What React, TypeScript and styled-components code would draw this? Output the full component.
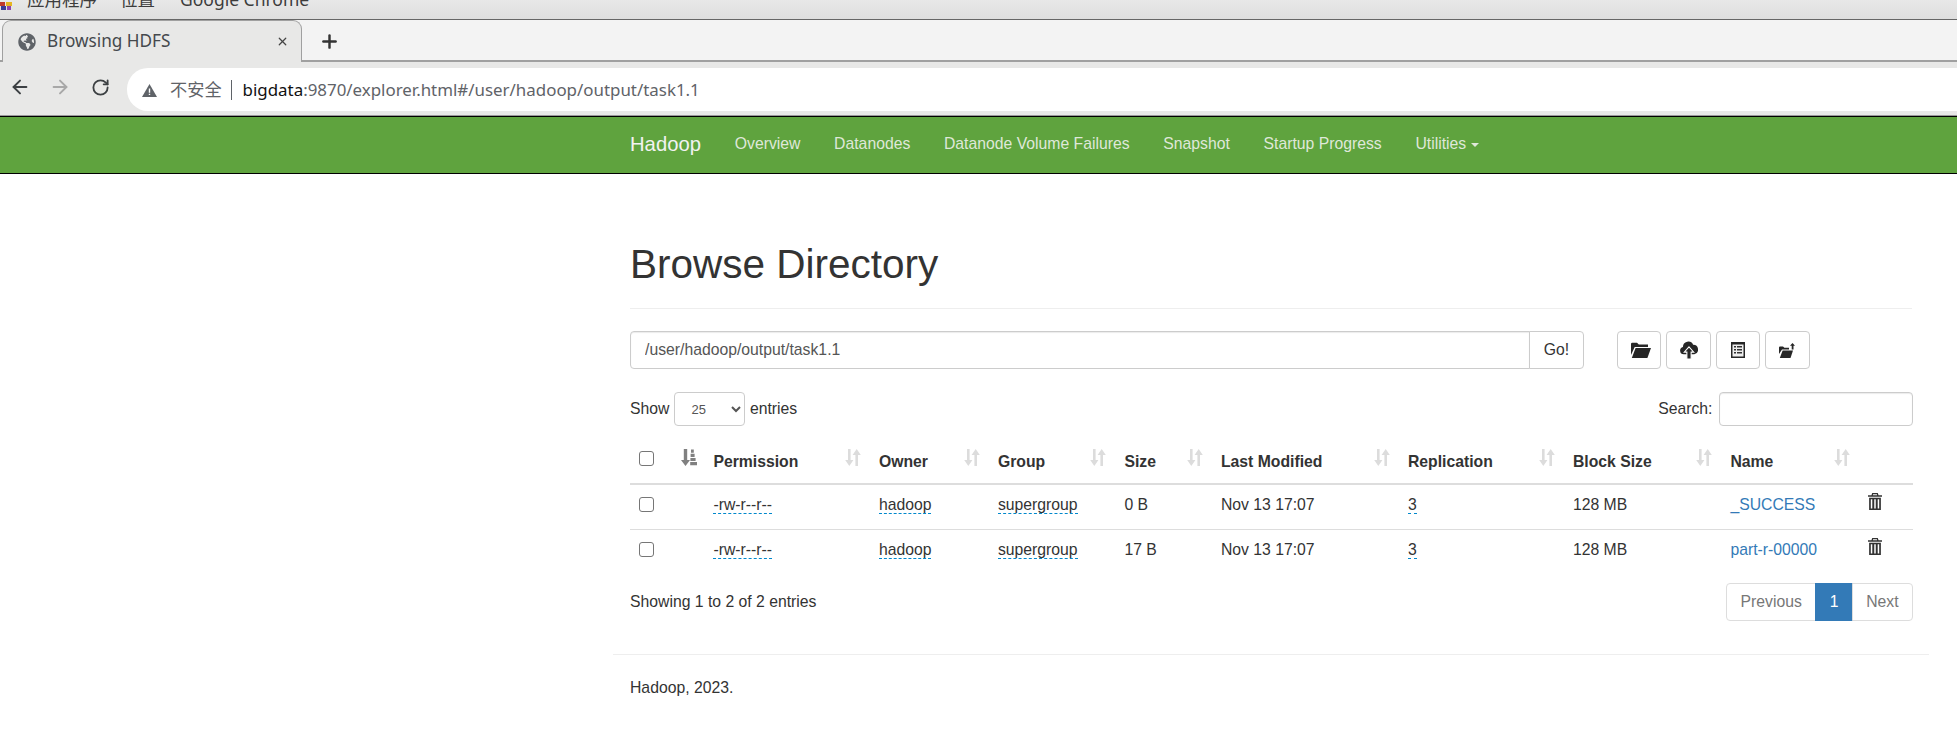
import React from "react";
import styled, { createGlobalStyle } from "styled-components";
import { ArrowLeft, ArrowRight, RotateCw, Plus, X } from "lucide-react";
import { FaGlobeAmericas } from "react-icons/fa";

const Global = createGlobalStyle`
  html, body {
    margin: 0;
    padding: 0;
    height: 100%;
    overflow: hidden;
    background: #fff;
  }
  * { box-sizing: border-box; }
`;

const Screen = styled.div`
  height: 752px;
  overflow: hidden;
  font-family: "Liberation Sans", Arial, sans-serif;
  font-size: 15.75px;
  line-height: 22.5px;
  color: #333;
`;

const DesktopBar = styled.div`
  height: 20px;
  display: flex;
  align-items: flex-end;
  overflow: hidden;
  padding: 0 0 8px 0;
  background: linear-gradient(#e8e8e8, #dedede);
  border-bottom: 1px solid #666;
  font-family: "Noto Sans", "Noto Sans CJK SC", sans-serif;
  font-size: 17.5px;
  line-height: 24px;
  color: #3c3c3c;
`;

const DesktopItem = styled.span<{ $gap: number }>`
  margin-left: ${(p) => p.$gap}px;
  white-space: nowrap;
`;

const AppsIcon = styled.svg`
  width: 12px;
  height: 8px;
  flex: none;
  align-self: flex-end;
  margin-bottom: 1px;
`;

const TabStrip = styled.div`
  height: 42px;
  display: flex;
  align-items: stretch;
  background: #f3f3f3;
  border-bottom: 2px solid #a0a0a0;
  padding-left: 2px;
`;

const Tab = styled.div`
  width: 300px;
  height: 42px;
  display: flex;
  align-items: center;
  padding: 0 12px 0 15px;
  background: #e8e8e7;
  border: 1px solid #a0a0a0;
  border-bottom: none;
  border-radius: 9px 9px 0 0;
  font-family: "Noto Sans", sans-serif;
  font-size: 17.2px;
  color: #45494d;
`;

const TabTitle = styled.span`
  flex: 1;
  margin-left: 11px;
  white-space: nowrap;
`;

const NewTab = styled.div`
  margin-left: 17px;
  padding-top: 2px;
  display: flex;
  align-items: center;
  color: #333;
`;

const Toolbar = styled.div`
  height: 54px;
  display: flex;
  align-items: flex-start;
  background: #e8e8e7;
  padding: 6px 0 0 9px;
  border-bottom: 1px solid #999;
`;

const ToolIcon = styled.div<{ $gap: number }>`
  height: 38px;
  margin-left: ${(p) => p.$gap}px;
  display: flex;
  align-items: center;
`;

const AddressBar = styled.div`
  flex: 1;
  height: 43px;
  margin-left: 17px;
  display: flex;
  align-items: center;
  padding: 1px 0 0 15px;
  background: #fff;
  border-radius: 21px 0 0 21px;
  font-family: "Noto Sans", "Noto Sans CJK SC", sans-serif;
  font-size: 16.9px;
  color: #5f6368;
`;

const Insecure = styled.span`
  margin-left: 13px;
  padding-right: 9px;
  border-right: 1.5px solid #5f6368;
  line-height: 20px;
  font-size: 17.2px;
`;

const Host = styled.span`
  margin-left: 11px;
  color: #111;
`;

const Navbar = styled.nav`
  height: 58px;
  display: flex;
  align-items: center;
  padding: 0 0 2px 630px;
  background: #5fa33e;
  border-top: 1px solid #000;
  border-bottom: 1px solid #000;
`;

const Brand = styled.a`
  font-size: 20.25px;
  color: #f2f2f2;
  margin-right: 17px;
`;

const NavLink = styled.a`
  padding: 0 16.85px;
  color: #dfe8d9;
  white-space: nowrap;
`;

const Caret = styled.i`
  display: inline-block;
  margin-left: 5px;
  vertical-align: middle;
  border-top: 4.5px solid #dfe8d9;
  border-left: 4.5px solid transparent;
  border-right: 4.5px solid transparent;
`;

const Main = styled.main`
  width: 1316px;
  margin-left: 613px;
  padding: 0 17px;
`;

const PageHeader = styled.div`
  height: 135px;
  padding-top: 68px;
  border-bottom: 1px solid #eee;
`;

const Title = styled.h1`
  margin: 0;
  font-size: 40.5px;
  line-height: 45px;
  font-weight: 400;
  color: #333;
`;

const PathRow = styled.div`
  display: flex;
  margin-top: 22px;
  height: 38px;
`;

const PathInput = styled.input`
  width: 900px;
  height: 38px;
  padding: 0 14px;
  border: 1px solid #ccc;
  border-radius: 4px 0 0 4px;
  box-shadow: inset 0 1px 1px rgba(0, 0, 0, 0.08);
  font: inherit;
  color: #555;
`;

const GoButton = styled.button`
  width: 55px;
  height: 38px;
  margin-left: -1px;
  background: #fff;
  border: 1px solid #ccc;
  border-radius: 0 4px 4px 0;
  font: inherit;
  color: #333;
`;

const Tools = styled.div`
  display: flex;
  gap: 5px;
  margin-left: 33px;
`;

const ToolButton = styled.button`
  width: 44.4px;
  height: 38px;
  padding: 0;
  display: flex;
  align-items: center;
  justify-content: center;
  background: #fff;
  border: 1px solid #ccc;
  border-radius: 4px;
  color: #333;
`;

const FolderSvg = styled.svg`
  margin-left: 4px;
  fill: #262626;
`;

const FilterRow = styled.div`
  display: flex;
  align-items: center;
  justify-content: space-between;
  margin: 23px -1px 0 0;
  height: 34px;
`;

const Label = styled.label<{ $gap: number }>`
  display: flex;
  align-items: center;
  gap: ${(p) => p.$gap}px;
`;

const LengthSelect = styled.select`
  width: 70.5px;
  height: 34px;
  padding-left: 12px;
  background: #fff;
  border: 1px solid #ccc;
  border-radius: 4px;
  font-family: "Liberation Sans", Arial, sans-serif;
  font-size: 13px;
  color: #555;
`;

const SearchInput = styled.input`
  width: 194px;
  height: 34px;
  border: 1px solid #ccc;
  border-radius: 4px;
  box-shadow: inset 0 1px 1px rgba(0, 0, 0, 0.08);
`;

const Table = styled.table`
  width: 1283px;
  margin-top: 11px;
  table-layout: fixed;
  border-collapse: collapse;
`;

const HeadCell = styled.th`
  height: 47px;
  padding: 0 9px 8px;
  vertical-align: bottom;
  text-align: left;
  font-weight: 700;
  border-bottom: 2px solid #ddd;
`;

const HeadInner = styled.div`
  display: flex;
  align-items: center;
  justify-content: space-between;
`;

const SortSvg = styled.svg<{ $active?: boolean }>`
  width: 16px;
  height: 17px;
  flex: none;
  margin-bottom: 9px;
  fill: ${(p) => (p.$active ? "#808080" : "#dcdcdc")};
`;

const Row = styled.tr`
  height: 45px;
  & + & td {
    border-top: 1px solid #ddd;
  }
`;

const Cell = styled.td`
  padding: 0 9px 4px;
  vertical-align: middle;
  white-space: nowrap;
`;

const Check = styled.input.attrs({ type: "checkbox" })`
  appearance: none;
  display: block;
  width: 15px;
  height: 15px;
  margin: 0;
  background: #fff;
  border: 1.5px solid #767676;
  border-radius: 3px;
`;

const HeadCheck = styled(Check)`
  margin-bottom: 9px;
`;

const Editable = styled.a`
  border-bottom: 1px dashed #08c;
  color: #333;
  padding-bottom: 0;
`;

const FileLink = styled.a`
  color: #337ab7;
`;

const TrashSvg = styled.svg`
  display: block;
  width: 14px;
  height: 17px;
  margin: -7px 0 0 0;
  fill: #333;
`;

const TableFooter = styled.div`
  display: flex;
  justify-content: space-between;
  margin: 9px -1px 0 0;
`;

const Info = styled.div`
  padding-top: 7.5px;
`;

const Pager = styled.div`
  display: flex;
  height: 38px;
`;

const PageItem = styled.a<{ $active?: boolean }>`
  padding: 0 13.4px;
  display: flex;
  align-items: center;
  margin-left: -1px;
  color: ${(p) => (p.$active ? "#fff" : "#777")};
  background: ${(p) => (p.$active ? "#337ab7" : "#fff")};
  border: 1px solid ${(p) => (p.$active ? "#337ab7" : "#ddd")};
  &:first-child {
    border-radius: 4px 0 0 4px;
  }
  &:last-child {
    border-radius: 0 4px 4px 0;
  }
`;

const Rule = styled.hr`
  width: 1316px;
  margin: 33px 0 0 -17px;
  border: 0;
  border-top: 1px solid #eee;
`;

const Copyright = styled.p`
  margin: 22px 0 0;
`;

const cols = [42, 32.4, 165.5, 119, 126.5, 96.5, 187, 165, 157.5, 137.5, 54.1];
const heads = [
  "Permission",
  "Owner",
  "Group",
  "Size",
  "Last Modified",
  "Replication",
  "Block Size",
  "Name",
];
const files = [
  { size: "0 B", name: "_SUCCESS" },
  { size: "17 B", name: "part-r-00000" },
];

function SortIcon() {
  return (
    <SortSvg viewBox="0 0 16 17">
      <path d="M3 0h2.6v11H8.4L4.3 17 .2 11H3zM10.4 17V6H7.6L11.7 0l4.1 6H13v11z" />
    </SortSvg>
  );
}

function SortActiveIcon() {
  return (
    <SortSvg viewBox="0 0 16 17" $active>
      <path d="M2.800 0h3.400v11H9L4.500 17 0 11H2.800z" />
      <path d="M10 .5h2.800v3.200H10zM9.600 4.700H13.600v3.200H9.600zM9.400 8.900h5.200v3.200H9.400zM9.200 13.100H16v3.200H9.200z" />
    </SortSvg>
  );
}

function TrashIcon() {
  return (
    <TrashSvg viewBox="0 0 15 18">
      <path d="M4.500 0h6l.8 2.200H15v1.600H0V2.200h3.700zM5.500 1.200l-.3 1h4.600l-.3-1z" fillRule="evenodd" />
      <path d="M1.200 5h12.600v13H1.200zM3 6.500V16.500h1.600V6.500zM6.700 6.500V16.500h1.600V6.500zM10.400 6.500V16.500H12V6.500z" fillRule="evenodd" />
    </TrashSvg>
  );
}

export default function App() {
  return (
    <Screen>
      <Global />
      <DesktopBar>
        <AppsIcon viewBox="0 0 12 8">
          <rect x="0" y="0" width="5" height="4" fill="#c0392b" />
          <rect x="6" y="0" width="6" height="4" fill="#e6b422" />
          <rect x="1" y="4" width="5" height="4" fill="#3b3b98" />
          <rect x="7" y="4" width="4" height="4" fill="#8e44ad" />
        </AppsIcon>
        <DesktopItem $gap={15}>应用程序</DesktopItem>
        <DesktopItem $gap={23}>位置</DesktopItem>
        <DesktopItem $gap={25}>Google Chrome</DesktopItem>
      </DesktopBar>

      <TabStrip>
        <Tab>
          <FaGlobeAmericas size={18} color="#5f6368" />
          <TabTitle>Browsing HDFS</TabTitle>
          <X size={13} strokeWidth={2.2} color="#444" />
        </Tab>
        <NewTab>
          <Plus size={21} strokeWidth={2.8} />
        </NewTab>
      </TabStrip>

      <Toolbar>
        <ToolIcon $gap={0}>
          <ArrowLeft size={22} strokeWidth={2.1} color="#3c4043" />
        </ToolIcon>
        <ToolIcon $gap={18}>
          <ArrowRight size={22} strokeWidth={2.1} color="#a8a8a8" />
        </ToolIcon>
        <ToolIcon $gap={20}>
          <RotateCw size={19} strokeWidth={2.3} color="#3c4043" />
        </ToolIcon>
        <AddressBar>
          <svg width="15" height="13" viewBox="0 0 15 13">
            <path d="M7.500 0 15 13H0z" fill="#5f6368" />
            <path d="M6.800 4.500h1.400v4.300H6.800zM6.800 9.700h1.400v1.400H6.800z" fill="#fff" />
          </svg>
          <Insecure>不安全</Insecure>
          <Host>bigdata</Host>:9870/explorer.html#/user/hadoop/output/task1.1
        </AddressBar>
      </Toolbar>

      <Navbar>
        <Brand>Hadoop</Brand>
        <NavLink>Overview</NavLink>
        <NavLink>Datanodes</NavLink>
        <NavLink>Datanode Volume Failures</NavLink>
        <NavLink>Snapshot</NavLink>
        <NavLink>Startup Progress</NavLink>
        <NavLink>
          Utilities
          <Caret />
        </NavLink>
      </Navbar>

      <Main>
        <PageHeader>
          <Title>Browse Directory</Title>
        </PageHeader>

        <PathRow>
          <PathInput defaultValue="/user/hadoop/output/task1.1" />
          <GoButton>Go!</GoButton>
          <Tools>
            <ToolButton>
              <FolderSvg width="20" height="16" viewBox="0 0 20 16">
                <path d="M0 13V2Q0 .8 1.200 .8H6L7.800 2.600H17V5H3.700z" />
                <path d="M4.600 6H20L16.400 16H.8z" />
              </FolderSvg>
            </ToolButton>
            <ToolButton>
              <svg width="18" height="18" viewBox="0 0 17 17" fill="#262626">
                <path d="M3.500 12.500A3.500 3.500 0 0 1 2.800 5.600 5 5 0 0 1 12.400 3.600 4.500 4.500 0 0 1 13.500 12.500z" />
                <path d="M8.500 5.500 13 10.500H10.500V17H6.500V10.500H4z" stroke="#fff" strokeWidth="1" />
              </svg>
            </ToolButton>
            <ToolButton>
              <svg width="14" height="16" viewBox="0 0 14 16">
                <rect x="0" y="0" width="14" height="16" fill="#262626" />
                <rect x="1.500" y="2.500" width="11" height="12" fill="#eee" />
                <path d="M3 4h2v1.500H3zM6 4h5v1.500H6zM3 7h2v1.500H3zM6 7h5v1.500H6zM3 10h2v1.500H3zM6 10h5v1.500H6z" fill="#333" />
              </svg>
            </ToolButton>
            <ToolButton>
              <svg width="17" height="15" viewBox="0 0 17 15" fill="#262626">
                <path d="M0 11V4.500Q0 3.500 1 3.500H4L5.400 4.800H10V6.500H3z" />
                <path d="M3.600 7.500H14L11.500 15H.8z" />
                <path d="M13.500 0 16 2.800H14.500V6.500H12.700V2.800H11z" />
              </svg>
            </ToolButton>
          </Tools>
        </PathRow>

        <FilterRow>
          <Label $gap={5}>
            Show
            <LengthSelect defaultValue="25">
              <option>25</option>
              <option>50</option>
              <option>100</option>
            </LengthSelect>
            entries
          </Label>
          <Label $gap={6.5}>
            Search:
            <SearchInput />
          </Label>
        </FilterRow>

        <Table>
          <colgroup>
            {cols.map((w, i) => (
              <col key={i} width={w} />
            ))}
          </colgroup>
          <thead>
            <tr>
              <HeadCell>
                <HeadCheck />
              </HeadCell>
              <HeadCell>
                <HeadInner>
                  <SortActiveIcon />
                </HeadInner>
              </HeadCell>
              {heads.map((h) => (
                <HeadCell key={h}>
                  <HeadInner>
                    {h}
                    <SortIcon />
                  </HeadInner>
                </HeadCell>
              ))}
              <HeadCell />
            </tr>
          </thead>
          <tbody>
            {files.map((f) => (
              <Row key={f.name}>
                <Cell>
                  <Check />
                </Cell>
                <Cell />
                <Cell>
                  <Editable>-rw-r--r--</Editable>
                </Cell>
                <Cell>
                  <Editable>hadoop</Editable>
                </Cell>
                <Cell>
                  <Editable>supergroup</Editable>
                </Cell>
                <Cell>{f.size}</Cell>
                <Cell>Nov 13 17:07</Cell>
                <Cell>
                  <Editable>3</Editable>
                </Cell>
                <Cell>128 MB</Cell>
                <Cell>
                  <FileLink>{f.name}</FileLink>
                </Cell>
                <Cell>
                  <TrashIcon />
                </Cell>
              </Row>
            ))}
          </tbody>
        </Table>

        <TableFooter>
          <Info>Showing 1 to 2 of 2 entries</Info>
          <Pager>
            <PageItem>Previous</PageItem>
            <PageItem $active>1</PageItem>
            <PageItem>Next</PageItem>
          </Pager>
        </TableFooter>

        <Rule />
        <Copyright>Hadoop, 2023.</Copyright>
      </Main>
    </Screen>
  );
}
